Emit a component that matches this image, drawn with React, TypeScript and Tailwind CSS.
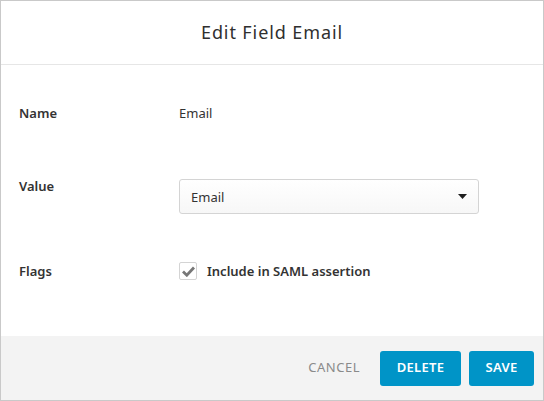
import React from "react";

function Row({ label, children }: { label: string; children: React.ReactNode }) {
  return (
    <div className="flex items-start">
      <div className="w-[160px] shrink-0 text-[13px] leading-[18px] font-semibold text-[#333]">{label}</div>
      <div className="flex-1 text-[13px] leading-[18px]">{children}</div>
    </div>
  );
}

export default function App() {
  return (
    <div className="flex h-[401px] w-[544px] flex-col border border-[#c9c9c9] bg-white font-['Noto_Sans',sans-serif] text-[#333]">
      <div className="flex h-[64px] shrink-0 items-center justify-center border-b border-[#e6e6e6]">
        <h1 className="text-[18px] tracking-[0.05em] text-[#2f2f2f]">Edit Field Email</h1>
      </div>

      <div className="flex flex-1 flex-col px-[18px] pt-[39px]">
        <Row label="Name">
          <span className="text-[#333]">Email</span>
        </Row>

        <div className="mt-[55px]">
          <Row label="Value">
            <button className="mt-[2px] flex h-[35px] w-[300px] items-center justify-between rounded-[3px] border border-[#d4d4d4] bg-gradient-to-b from-white to-[#f7f7f7] pl-[11px] pr-[11px] text-[13px] text-[#333]">
              <span>Email</span>
              <svg width="9" height="5" viewBox="0 0 9 5">
                <path d="M0 0h9L4.5 5z" fill="#1f1f1f" />
              </svg>
            </button>
          </Row>
        </div>

        <div className="mt-[48px]">
          <Row label="Flags">
            <label className="flex items-center gap-[10px]">
              <span className="flex h-[18px] w-[18px] items-center justify-center rounded-[2px] border border-[#d4d4d4] bg-white">
                <svg width="13" height="11" viewBox="0 0 13 11">
                  <path d="M1 5.5 L4.8 9.2 L12 1.5" fill="none" stroke="#777" strokeWidth="2.8" />
                </svg>
              </span>
              <span className="font-semibold text-[#333]">Include in SAML assertion</span>
            </label>
          </Row>
        </div>
      </div>

      <div className="flex h-[64px] shrink-0 items-center justify-end gap-[8px] bg-[#f3f3f3] pr-[9px]">
        <button className="mr-[12px] text-[13px] tracking-[0.04em] text-[#8a8a8a]">CANCEL</button>
        <button className="h-[35px] w-[81px] rounded-[3px] bg-[#0094c7] text-[13px] font-semibold tracking-[0.02em] text-white">DELETE</button>
        <button className="h-[35px] w-[65px] rounded-[3px] bg-[#0094c7] text-[13px] font-semibold tracking-[0.02em] text-white">SAVE</button>
      </div>
    </div>
  );
}
